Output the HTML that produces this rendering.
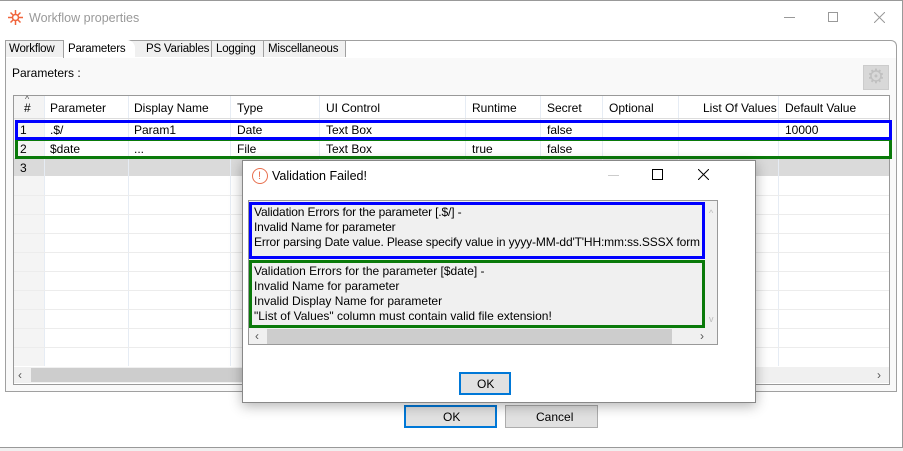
<!DOCTYPE html>
<html><head><style>
*{margin:0;padding:0;box-sizing:border-box}
body{width:903px;height:451px;overflow:hidden;background:#fff;font-family:"Liberation Sans",sans-serif;font-size:12px;color:#000;position:relative}
.a{position:absolute}
.t{position:absolute;white-space:nowrap;line-height:14px}
.tb{font-size:11.5px;letter-spacing:-0.2px}
.hl{position:absolute;left:14px;width:875px;height:1px;background:#ececec}
.vl{position:absolute;top:96px;width:1px;height:270px;background:#e6ecf4}
</style></head><body>
<div class="a" style="left:0;top:0;width:903px;height:1px;background:#999"></div>
<div class="a" style="left:902px;top:0;width:1px;height:451px;background:#999"></div>
<svg class="a" style="left:8px;top:10px" width="15" height="15" viewBox="0 0 15 15"><g stroke="#f0643c" stroke-width="1.5"><line x1="7.5" y1="0" x2="7.5" y2="15"/><line x1="0" y1="7.5" x2="15" y2="7.5"/><line x1="2.5" y1="2.5" x2="12.5" y2="12.5"/><line x1="12.5" y1="2.5" x2="2.5" y2="12.5"/></g><circle cx="7.5" cy="7.5" r="3" fill="#fff" stroke="#f0643c" stroke-width="1.5"/></svg>
<div class="t" style="left:29px;top:11px;color:#999;font-size:12.5px">Workflow properties</div>
<div class="a" style="left:784px;top:17px;width:11px;height:1px;background:#999"></div>
<div class="a" style="left:828px;top:12px;width:10px;height:10px;border:1px solid #999"></div>
<svg class="a" style="left:874px;top:12px" width="11" height="11"><path d="M0 0L11 11M11 0L0 11" stroke="#999"/></svg>

<div class="a" style="left:5px;top:57px;width:892px;height:335px;border:1px solid #a0a0a0;background:#f9f9f9"></div>
<div class="a" style="left:5px;top:40px;width:892px;height:18px;border:1px solid #a0a0a0;border-bottom:none;border-radius:0 6px 0 0;background:#fff"></div>
<div class="a" style="left:6px;top:41px;width:340px;height:16px;background:#f0f0f0"></div>
<div class="t tb" style="left:9px;top:42px">Workflow</div>
<div class="a" style="left:63px;top:40px;width:72px;height:18px;background:#fff;border-left:1px solid #a0a0a0;border-radius:0 8px 0 0"></div>
<div class="t tb" style="left:68px;top:42px">Parameters</div>
<div class="t tb" style="left:146px;top:42px">PS Variables</div>
<div class="a" style="left:211px;top:41px;width:1px;height:16px;background:#a0a0a0"></div>
<div class="t tb" style="left:216px;top:42px">Logging</div>
<div class="a" style="left:263px;top:41px;width:1px;height:16px;background:#a0a0a0"></div>
<div class="t tb" style="left:268px;top:42px">Miscellaneous</div>
<div class="a" style="left:345px;top:41px;width:1px;height:16px;background:#a0a0a0"></div>
<div class="t" style="left:12px;top:66px">Parameters :</div>
<div class="a" style="left:863px;top:65px;width:26px;height:25px;background:#d8d8d8;border:1px solid #ccc"></div>
<div class="t" style="left:867px;top:66px;font-size:20px;line-height:22px;color:#c0c0c0">⚙</div>

<div class="a" style="left:13px;top:95px;width:877px;height:290px;border:1px solid #999;background:#fff"></div>
<div class="a" style="left:14px;top:96px;width:30px;height:270px;background:#f4f4f4"></div>
<div class="a" style="left:14px;top:158px;width:875px;height:18px;background:#dadada"></div>
<div class="vl" style="left:44px"></div><div class="vl" style="left:128px"></div><div class="vl" style="left:230px"></div><div class="vl" style="left:319px"></div><div class="vl" style="left:465px"></div><div class="vl" style="left:540px"></div><div class="vl" style="left:602px"></div><div class="vl" style="left:678px"></div><div class="vl" style="left:778px"></div>
<div class="hl" style="top:118px;background:#ddd"></div>
<div class="hl" style="top:195px"></div><div class="hl" style="top:214px"></div><div class="hl" style="top:233px"></div><div class="hl" style="top:252px"></div><div class="hl" style="top:271px"></div><div class="hl" style="top:290px"></div><div class="hl" style="top:309px"></div><div class="hl" style="top:328px"></div><div class="hl" style="top:347px"></div>
<div class="t" style="left:25px;top:92px;font-size:9px;color:#555">^</div>
<div class="t" style="left:24px;top:101px">#</div>
<div class="t" style="left:50px;top:101px">Parameter</div>
<div class="t" style="left:134px;top:101px">Display Name</div>
<div class="t" style="left:237px;top:101px">Type</div>
<div class="t" style="left:326px;top:101px">UI Control</div>
<div class="t" style="left:472px;top:101px">Runtime</div>
<div class="t" style="left:547px;top:101px">Secret</div>
<div class="t" style="left:609px;top:101px">Optional</div>
<div class="t" style="left:703px;top:101px">List Of Values</div>
<div class="t" style="left:785px;top:101px">Default Value</div>
<div class="t" style="left:20px;top:123px">1</div><div class="t" style="left:50px;top:123px">.$/</div><div class="t" style="left:134px;top:123px">Param1</div><div class="t" style="left:237px;top:123px">Date</div><div class="t" style="left:326px;top:123px">Text Box</div><div class="t" style="left:547px;top:123px">false</div><div class="t" style="left:785px;top:123px">10000</div>
<div class="t" style="left:20px;top:142px">2</div><div class="t" style="left:50px;top:142px">$date</div><div class="t" style="left:134px;top:142px">...</div><div class="t" style="left:237px;top:142px">File</div><div class="t" style="left:326px;top:142px">Text Box</div><div class="t" style="left:472px;top:142px">true</div><div class="t" style="left:547px;top:142px">false</div>
<div class="t" style="left:20px;top:161px">3</div>
<div class="a" style="left:15px;top:138px;width:877px;height:21px;border:3px solid #0a7a0a"></div>
<div class="a" style="left:15px;top:120px;width:877px;height:20px;border:3px solid #0000ff"></div>
<div class="a" style="left:14px;top:367px;width:875px;height:16px;background:#f0f0f0"></div>
<div class="a" style="left:31px;top:368px;width:410px;height:14px;background:#cdcdcd"></div>
<div class="t" style="left:18px;top:368px;color:#555">‹</div>
<div class="t" style="left:877px;top:368px;color:#555">›</div>

<div class="a" style="left:404px;top:405px;width:93px;height:23px;border:2px solid #0078d7;background:#e1e1e1"></div>
<div class="t" style="left:443px;top:410px">OK</div>
<div class="a" style="left:505px;top:405px;width:93px;height:23px;border:1px solid #adadad;background:#e1e1e1"></div>
<div class="t" style="left:536px;top:410px">Cancel</div>
<div class="a" style="left:0;top:447px;width:903px;height:4px;background:#f0f0f0;border-top:1px solid #999"></div>

<div class="a" style="left:242px;top:160px;width:514px;height:243px;background:#fff;border:1px solid #888;box-shadow:0 3px 12px rgba(0,0,0,.3)"></div>
<div class="a" style="left:252px;top:168px;width:16px;height:16px;border:1.5px solid #e8704f;border-radius:50%"></div>
<div class="t" style="left:258px;top:169px;color:#e8704f;font-size:11px">!</div>
<div class="t" style="left:272px;top:169px;font-size:12.5px">Validation Failed!</div>
<div class="a" style="left:608px;top:175px;width:11px;height:1px;background:#ccc"></div>
<div class="a" style="left:652px;top:169px;width:11px;height:11px;border:1px solid #000"></div>
<svg class="a" style="left:698px;top:169px" width="11" height="11"><path d="M0 0L11 11M11 0L0 11" stroke="#000"/></svg>
<div class="a" style="left:248px;top:200px;width:470px;height:145px;background:#f0f0f0;border:1px solid #999"></div>
<div class="a" style="left:249px;top:202px;width:456px;height:57px;border:3px solid #0000ff"></div>
<div class="a" style="left:249px;top:260px;width:456px;height:68px;border:3px solid #0a7a0a"></div>
<div class="t" style="left:254px;top:205px;line-height:15px;overflow:hidden;width:446px;letter-spacing:-0.15px">Validation Errors for the parameter [.$/] -<br>Invalid Name for parameter<br>Error parsing Date value. Please specify value in yyyy-MM-dd'T'HH:mm:ss.SSSX format</div>
<div class="t" style="left:254px;top:264px;line-height:15px">Validation Errors for the parameter [$date] -<br>Invalid Name for parameter<br>Invalid Display Name for parameter<br>"List of Values" column must contain valid file extension!</div>
<div class="t" style="left:709px;top:206px;color:#bbb;font-size:9px">^</div>
<div class="t" style="left:709px;top:312px;color:#bbb;font-size:9px">v</div>
<div class="a" style="left:249px;top:329px;width:468px;height:15px;background:#f0f0f0"></div>
<div class="a" style="left:267px;top:329px;width:405px;height:15px;background:#cdcdcd"></div>
<div class="t" style="left:255px;top:329px;color:#555">‹</div>
<div class="t" style="left:700px;top:329px;color:#555">›</div>
<div class="a" style="left:459px;top:372px;width:52px;height:23px;border:2px solid #0078d7;background:#e1e1e1"></div>
<div class="t" style="left:477px;top:377px">OK</div>
</body></html>
